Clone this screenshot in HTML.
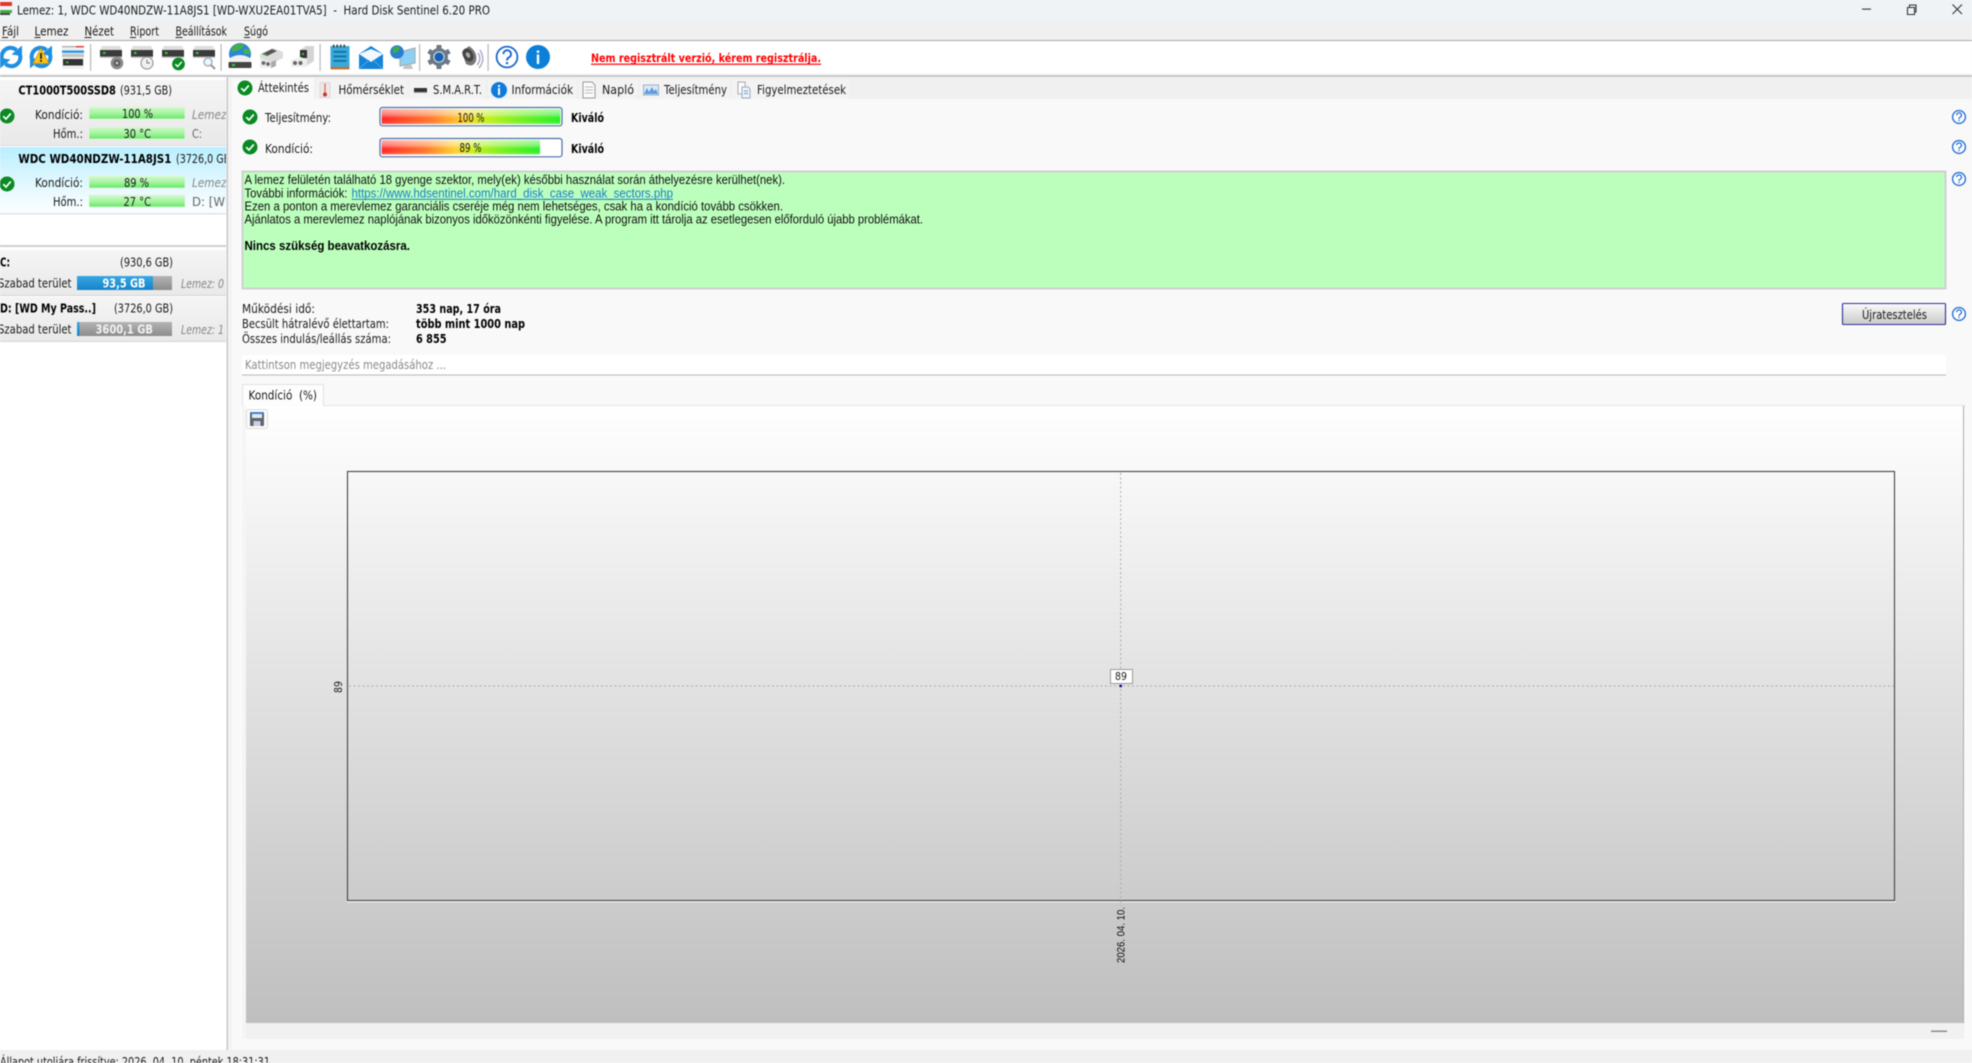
<!DOCTYPE html>
<html lang="hu"><head><meta charset="utf-8"><title>Hard Disk Sentinel</title>
<style>
html,body{margin:0;padding:0;background:#f9f9f9;width:1972px;height:1063px;overflow:hidden}
body>svg{display:block;position:absolute;left:0;top:0;filter:blur(.4px)}
text{font-family:"DejaVu Sans","Liberation Sans",sans-serif;font-size:12px;fill:#1a1a1a;white-space:pre}
.b{font-weight:bold;fill:#000}
.a{font-family:"Liberation Sans",Arial,sans-serif;font-size:12.5px;fill:#111}
.g{fill:#888;font-style:italic}
.w{fill:#fff;font-weight:bold}
</style></head><body>
<svg width="1972" height="1063" viewBox="0 0 1972 1063" xmlns="http://www.w3.org/2000/svg">
<defs>
<clipPath id="pc"><rect x="0" y="77" width="226" height="973"/></clipPath>
<linearGradient id="chart" x1="0" y1="0" x2="0" y2="1"><stop offset="0" stop-color="#ffffff"/><stop offset="1" stop-color="#bfbfbf"/></linearGradient>
<linearGradient id="gbar" x1="0" y1="0" x2="0" y2="1"><stop offset="0" stop-color="#d2f9cc"/><stop offset=".5" stop-color="#a8f4a2"/><stop offset="1" stop-color="#62ea62"/></linearGradient>
<linearGradient id="rg" x1="0" y1="0" x2="1" y2="0"><stop offset="0" stop-color="#ff2a2a"/><stop offset=".28" stop-color="#ff7a2a"/><stop offset=".46" stop-color="#ffd030"/><stop offset=".58" stop-color="#c8f020"/><stop offset=".75" stop-color="#80f020"/><stop offset="1" stop-color="#28f028"/></linearGradient>
<linearGradient id="gloss" x1="0" y1="0" x2="0" y2="1"><stop offset="0" stop-color="#fff" stop-opacity=".62"/><stop offset=".35" stop-color="#fff" stop-opacity=".38"/><stop offset=".6" stop-color="#fff" stop-opacity="0"/><stop offset=".8" stop-color="#fff" stop-opacity="0"/><stop offset="1" stop-color="#fff" stop-opacity=".2"/></linearGradient>
<linearGradient id="sel" x1="0" y1="0" x2="0" y2="1"><stop offset="0" stop-color="#b9efff"/><stop offset=".55" stop-color="#e2f8ff"/><stop offset="1" stop-color="#fbfeff"/></linearGradient>
<linearGradient id="card" x1="0" y1="0" x2="0" y2="1"><stop offset="0" stop-color="#f5f5f5"/><stop offset="1" stop-color="#e9e9e9"/></linearGradient>
<linearGradient id="blue" x1="0" y1="0" x2="0" y2="1"><stop offset="0" stop-color="#38a8e4"/><stop offset="1" stop-color="#1583c8"/></linearGradient>
<linearGradient id="gray" x1="0" y1="0" x2="0" y2="1"><stop offset="0" stop-color="#b4b4b4"/><stop offset="1" stop-color="#8c8c8c"/></linearGradient>
<linearGradient id="btn" x1="0" y1="0" x2="0" y2="1"><stop offset="0" stop-color="#fbfbfb"/><stop offset="1" stop-color="#c9c9c9"/></linearGradient>
<g id="chk"><circle r="7.5" fill="#0a8a22"/><path d="M-3.8,.2 L-1,3 L3.8,-2.6" fill="none" stroke="#fff" stroke-width="1.7"/></g>
<g id="hlp"><circle r="6.4" fill="#fff" stroke="#2a72d6" stroke-width="1.4"/><path d="M-2.2,-1.8 A2.3,2.3 0 1 1 1,.3 Q0,1 0,2" fill="none" stroke="#2a72d6" stroke-width="1.3"/><rect x="-.7" y="2.8" width="1.4" height="1.4" fill="#2a72d6"/></g>
<g id="hdd"><path d="M-9,-6 L-11,-2 H11 L9,-6 Z" fill="#dedede"/><rect x="-11" y="-2" width="22" height="6.6" fill="#3b3b3b"/><rect x="-8" y="0" width="2.5" height="2" fill="#35d035"/><rect x="-11" y="4.6" width="22" height="1.2" fill="#b4b4b4"/></g>
<g id="ref"><path d="M-8.8,3 A9,9 0 0 1 5.5,-7" fill="none" stroke="#1f8fe2" stroke-width="4"/><path d="M11,-11.5 L11,-1 L.5,-2.5 Z" fill="#1f8fe2"/><path d="M8.8,-3 A9,9 0 0 1 -5.5,7" fill="none" stroke="#1f8fe2" stroke-width="4"/><path d="M-11,11.5 L-11,1 L-.5,2.5 Z" fill="#1f8fe2"/></g>
</defs>

<!-- base -->
<rect width="1972" height="1063" fill="#f9f9f9"/>
<rect width="1972" height="21" fill="#eff3f5"/>
<rect y="21" width="1972" height="19" fill="#f0f0f0"/>
<rect y="40" width="1972" height="1" fill="#a8a8a8"/>
<rect y="41" width="1972" height="33" fill="#fff"/>
<rect y="74" width="1972" height="2" fill="#ececec"/>
<rect y="75.5" width="1972" height="1.2" fill="#b4b4b4"/>
<rect x="228" y="77" width="1744" height="22" fill="#f0f0f0"/>

<!-- title -->
<rect x="0" y="2" width="12" height="4" fill="#e8322e"/><rect x="0" y="6" width="12" height="4" fill="#f4f4f4"/><rect x="0" y="10" width="12" height="3" fill="#3fae4a"/><rect x="0" y="13" width="10" height="2" fill="#444"/>
<text x="17" y="14.5" textLength="473" lengthAdjust="spacingAndGlyphs">Lemez: 1, WDC WD40NDZW-11A8JS1 [WD-WXU2EA01TVA5]  -  Hard Disk Sentinel 6.20 PRO</text>
<rect x="1862" y="8.5" width="9" height="1.2" fill="#444"/>
<path d="M1907.5,7.5 h7 v7 h-7 z M1909.5,7 v-2 h6.5 v7 h-1.5" fill="none" stroke="#333" stroke-width="1.1"/>
<path d="M1952.5,4.5 L1962,14 M1962,4.5 L1952.5,14" stroke="#333" stroke-width="1.1"/>

<!-- menu -->
<text x="2" y="35.5" textLength="17" lengthAdjust="spacingAndGlyphs">Fájl</text>
<text x="34.5" y="35.5" textLength="34" lengthAdjust="spacingAndGlyphs">Lemez</text>
<text x="84.5" y="35.5" textLength="29.5" lengthAdjust="spacingAndGlyphs">Nézet</text>
<text x="130" y="35.5" textLength="29" lengthAdjust="spacingAndGlyphs">Riport</text>
<text x="175.5" y="35.5" textLength="51.5" lengthAdjust="spacingAndGlyphs">Beállítások</text>
<text x="244" y="35.5" textLength="24" lengthAdjust="spacingAndGlyphs">Súgó</text>
<g fill="#222"><rect x="2" y="37" width="6" height="1"/><rect x="34.5" y="37" width="6" height="1"/><rect x="84.5" y="37" width="7" height="1"/><rect x="130" y="37" width="6" height="1"/><rect x="175.5" y="37" width="7" height="1"/><rect x="244" y="37" width="6" height="1"/></g>

<!-- toolbar -->
<use href="#ref" x="11" y="57"/>
<use href="#ref" x="41" y="57"/>
<path d="M41,48 L49,63.5 H33 Z" fill="#f6c21c" stroke="#c88a00" stroke-width=".7"/><rect x="40.1" y="53" width="1.8" height="6" fill="#222"/><rect x="40.1" y="60" width="1.8" height="1.8" fill="#222"/>
<g transform="translate(73,57)"><rect x="-11" y="-11" width="22" height="23" fill="#efefef"/><rect x="-11" y="-11" width="22" height="1.3" fill="#b0b0b0"/><rect x="3" y="-11" width="8" height="1.3" fill="#e03030"/><rect x="-11" y="-6.5" width="22" height="2.4" fill="#2a9ae4"/><rect x="-11" y="-3" width="22" height="3" fill="#c4c4c4"/><rect x="-10" y="2" width="20" height="6.5" fill="#333"/><rect x="-7" y="4.5" width="2.4" height="1.6" fill="#35d035"/></g>
<rect x="90" y="44" width="1.2" height="27" fill="#b8b8b8"/>
<use href="#hdd" x="111" y="52"/><use href="#hdd" x="142" y="52"/><use href="#hdd" x="173" y="52"/><use href="#hdd" x="204" y="52"/>
<g transform="translate(117,63)"><circle r="6.3" fill="#8a8a8a"/><circle r="3.4" fill="#5a5a5a"/><circle r="1.4" fill="#ccc"/></g>
<g transform="translate(147,63)"><circle r="6" fill="#f2f2f2" stroke="#999" stroke-width="1.2"/><path d="M0,-3.5 V0 H3" fill="none" stroke="#777" stroke-width="1"/></g>
<use href="#chk" transform="translate(178.5,64) scale(.85)"/>
<g transform="translate(208,62)"><circle r="4" fill="#eef6ff" stroke="#9ab" stroke-width="1.3"/><path d="M3,3 L7,7" stroke="#999" stroke-width="2"/></g>
<rect x="220.5" y="44" width="1.2" height="27" fill="#b8b8b8"/>
<g transform="translate(240,54)"><circle r="11" fill="#2a86d8"/><path d="M-7,-8 Q-2,-11 3,-10 Q5,-7 1,-5 Q-3,-3 -9,-2 Z" fill="#45b04a"/><path d="M3,-5 L10,-5 L10,0 L4,0 Z" fill="#48b050"/><path d="M-10,4 Q0,-2 10,4 L11.5,8 H-11.5 Z" fill="#f0f0f0"/><rect x="-11.5" y="8" width="23" height="6" rx="1" fill="#444"/><rect x="-8" y="10" width="3" height="2" fill="#35d035"/></g>
<g transform="translate(271,57)"><path d="M-11,-3 L2,-9 L12,-5 L12,1 L0,7 L-11,3 Z" fill="#dcdcdc"/><path d="M-9,-3 L1,-8 L6,-6 L-4,-1 Z" fill="#555"/><rect x="-7" y="-3" width="2" height="1.5" fill="#35d035"/><path d="M-11,1 L0,5 V11 H-11 Z" fill="#eee"/><path d="M0,5 L5,3 V9 L0,11 Z" fill="#aaa"/><circle cx="-7.5" cy="6" r="1.9" fill="#666"/><circle cx="-3" cy="7" r="1.9" fill="#666"/></g>
<g transform="translate(303,57)"><path d="M-3,-7 L3,-11 H11 V4 L3,9 L-3,6 Z" fill="#d4d4d4"/><rect x="-3" y="-7" width="7" height="8" fill="#333"/><rect x="-1" y="-4" width="2" height="2" fill="#35d035"/><path d="M-12,3 L-3,0 L4,2 V10 H-12 Z" fill="#eee"/><circle cx="-8" cy="6" r="2" fill="#666"/><circle cx="-2.5" cy="6" r="2" fill="#666"/></g>
<rect x="319.5" y="44" width="1.2" height="27" fill="#b8b8b8"/>
<g transform="translate(340,57)"><rect x="-9.5" y="-11" width="19" height="23" fill="#39a9dc"/><rect x="-9.5" y="10" width="19" height="2.4" fill="#c8702a"/><g fill="#0d6f9f"><rect x="-6.5" y="-6" width="13" height="1.7"/><rect x="-6.5" y="-1.5" width="13" height="1.7"/><rect x="-6.5" y="3" width="13" height="1.7"/></g><g fill="#333"><rect x="-7" y="-12.5" width="1.4" height="3"/><rect x="-3.5" y="-12.5" width="1.4" height="3"/><rect x="0" y="-12.5" width="1.4" height="3"/><rect x="3.5" y="-12.5" width="1.4" height="3"/></g></g>
<g transform="translate(371,57)"><path d="M-12,-3 L0,-11 L12,-3 V12 H-12 Z" fill="#1583d6"/><path d="M-12,-3 L0,5 L12,-3 L0,-8 Z" fill="#f2f8fd"/><path d="M-12,12 L-2,3 M12,12 L2,3" stroke="#47a8ea" stroke-width="1"/></g>
<g transform="translate(403,57)"><path d="M-3,-5 L12,-9 V6 L-3,9 Z" fill="#8cd0f4" stroke="#a8aeb4" stroke-width="1.2"/><circle cx="-6" cy="-5" r="6.8" fill="#2a7fd0"/><path d="M-10,-9 Q-6,-12 -3,-9 Q-5,-4 -10,-4 Z" fill="#3cae48"/><path d="M1,9 L8,7 L10,12 L0,12 Z" fill="#c4c4c4"/></g>
<rect x="419" y="44" width="1.2" height="27" fill="#b8b8b8"/>
<g transform="translate(439,57)"><circle r="9" fill="#6c7884"/><g stroke="#6c7884" stroke-width="5"><path d="M0,-12 V12 M-10.4,-6 L10.4,6 M-10.4,6 L10.4,-6"/></g><circle r="5.6" fill="#d8e2ec"/><circle r="4.6" fill="#1761b4"/></g>
<g transform="translate(471,57)"><path d="M-9,-5 L-2,-11 Q7,-5 5,4 Q2,11 -5,7 Z" fill="#777"/><ellipse cx="-3" cy="-2" rx="5" ry="7" fill="#444" transform="rotate(-30 -3 -2)"/><ellipse cx="-3" cy="-2" rx="2" ry="3" fill="#aaa" transform="rotate(-30 -3 -2)"/><path d="M7,-4 Q11,2 6,8 M9,-7 Q15,3 8,11" fill="none" stroke="#a8a8c8" stroke-width="1.4"/></g>
<rect x="487.5" y="44" width="1.2" height="27" fill="#b8b8b8"/>
<g transform="translate(507,57)"><circle r="10.4" fill="#fff" stroke="#1f68cc" stroke-width="1.8"/><path d="M-3.6,-3 A3.8,3.8 0 1 1 1.6,.6 Q0,1.6 0,3.5" fill="none" stroke="#1f68cc" stroke-width="2"/><rect x="-1.1" y="5" width="2.2" height="2.2" fill="#1f68cc"/></g>
<g transform="translate(538,57)"><circle r="12" fill="#0c7fd8"/><rect x="-1.2" y="-2.5" width="2.4" height="9.5" fill="#fff"/><rect x="-1.2" y="-6.5" width="2.4" height="2.4" fill="#fff"/></g>
<text class="b" x="591" y="62" textLength="230" lengthAdjust="spacingAndGlyphs" style="fill:#f00;font-size:11.5px">Nem regisztrált verzió, kérem regisztrálja.</text>
<rect x="591" y="63.6" width="230" height="1.2" fill="#f00"/>

<!-- left panel -->
<rect x="0" y="77" width="226.5" height="973" fill="#fff"/>
<rect x="226.5" y="77" width="1.6" height="973" fill="#c8c8c8"/>
<rect x="228" y="77" width="4" height="973" fill="#f3f3f3"/>
<rect y="80" width="226" height="65" fill="url(#card)"/>
<rect y="145" width="226" height="1" fill="#ddd"/>
<rect y="147" width="226" height="66" fill="url(#sel)"/>
<rect y="213" width="226" height="1.5" fill="#e2e2e2"/>
<rect y="245" width="226" height="2" fill="#cfcfcf"/>
<rect y="250" width="226" height="45" fill="url(#card)"/>
<rect y="295" width="226" height="1" fill="#d6d6d6"/>
<rect y="297" width="226" height="44" fill="url(#card)"/>
<rect y="341" width="226" height="1" fill="#d6d6d6"/>

<g clip-path="url(#pc)">
<text class="b" x="18.4" y="94.5" textLength="97.5" lengthAdjust="spacingAndGlyphs">CT1000T500SSD8</text>
<text x="120" y="94.5" textLength="52" lengthAdjust="spacingAndGlyphs">(931,5 GB)</text>
<use href="#chk" x="7" y="116"/>
<text x="35" y="119" textLength="48" lengthAdjust="spacingAndGlyphs">Kondíció:</text>
<rect x="89" y="107" width="96" height="12" fill="url(#gbar)" stroke="#e6f6e4" stroke-width=".7"/>
<text x="122" y="118" textLength="31" lengthAdjust="spacingAndGlyphs">100 %</text>
<text class="g" x="192" y="119" textLength="38" lengthAdjust="spacingAndGlyphs">Lemez:</text>
<text x="53" y="138" textLength="30" lengthAdjust="spacingAndGlyphs">Hőm.:</text>
<rect x="89" y="127" width="96" height="12" fill="url(#gbar)" stroke="#e6f6e4" stroke-width=".7"/>
<text x="123.5" y="138" textLength="27.5" lengthAdjust="spacingAndGlyphs">30 °C</text>
<text x="192" y="138" textLength="10" lengthAdjust="spacingAndGlyphs" style="fill:#666">C:</text>

<text class="b" x="18.4" y="162.8" textLength="153" lengthAdjust="spacingAndGlyphs">WDC WD40NDZW-11A8JS1</text>
<text x="176" y="162.8" textLength="58" lengthAdjust="spacingAndGlyphs">(3726,0 GB)</text>
<use href="#chk" x="7" y="184"/>
<text x="35" y="187" textLength="48" lengthAdjust="spacingAndGlyphs">Kondíció:</text>
<rect x="89" y="176" width="96" height="12" fill="url(#gbar)" stroke="#e6f6e4" stroke-width=".7"/>
<text x="124" y="187" textLength="25" lengthAdjust="spacingAndGlyphs">89 %</text>
<text class="g" x="192" y="187" textLength="38" lengthAdjust="spacingAndGlyphs">Lemez:</text>
<text x="53" y="206" textLength="30" lengthAdjust="spacingAndGlyphs">Hőm.:</text>
<rect x="89" y="195" width="96" height="12" fill="url(#gbar)" stroke="#e6f6e4" stroke-width=".7"/>
<text x="123.5" y="206" textLength="27.5" lengthAdjust="spacingAndGlyphs">27 °C</text>
<text x="192" y="206" textLength="42" lengthAdjust="spacingAndGlyphs" style="fill:#666">D: [WD</text>
</g>

<text class="b" x="0" y="266.5" textLength="10" lengthAdjust="spacingAndGlyphs">C:</text>
<text x="120" y="266.5" textLength="53" lengthAdjust="spacingAndGlyphs">(930,6 GB)</text>
<text x="-2" y="287.5" textLength="73.5" lengthAdjust="spacingAndGlyphs">Szabad terület</text>
<rect x="77" y="276" width="95" height="14" fill="url(#gray)"/>
<rect x="77" y="276" width="76" height="14" fill="url(#blue)"/>
<text class="w" x="102.5" y="287.5" textLength="43" lengthAdjust="spacingAndGlyphs">93,5 GB</text>
<text class="g" x="181" y="288" textLength="43" lengthAdjust="spacingAndGlyphs">Lemez: 0</text>

<text class="b" x="0" y="312.5" textLength="96" lengthAdjust="spacingAndGlyphs">D: [WD My Pass..]</text>
<text x="114" y="312.5" textLength="59" lengthAdjust="spacingAndGlyphs">(3726,0 GB)</text>
<text x="-2" y="333.5" textLength="73.5" lengthAdjust="spacingAndGlyphs">Szabad terület</text>
<rect x="77" y="322" width="95" height="14" fill="url(#gray)"/>
<rect x="77" y="322" width="2.5" height="14" fill="url(#blue)"/>
<text class="w" x="95.5" y="333.5" textLength="57.5" lengthAdjust="spacingAndGlyphs" style="fill:#f2f2f2">3600,1 GB</text>
<text class="g" x="181" y="334" textLength="43" lengthAdjust="spacingAndGlyphs">Lemez: 1</text>

<!-- tabs -->
<rect x="232" y="78" width="82" height="21" fill="#f9f9f9"/>
<rect x="316" y="79" width="91" height="20" fill="#f3f3f3"/>
<rect x="409" y="79" width="77" height="20" fill="#f3f3f3"/>
<rect x="488" y="79" width="89" height="20" fill="#f3f3f3"/>
<rect x="579" y="79" width="59" height="20" fill="#f3f3f3"/>
<rect x="640" y="79" width="90" height="20" fill="#f3f3f3"/>
<rect x="732" y="79" width="117" height="20" fill="#f3f3f3"/>
<use href="#chk" x="245" y="88"/>
<text x="258" y="92" textLength="51" lengthAdjust="spacingAndGlyphs">Áttekintés</text>
<g transform="translate(325,90)"><rect x="-5" y="-7.5" width="10" height="15" fill="#efe8e8" stroke="#ccc" stroke-width=".6"/><rect x="-.7" y="-6.5" width="1.4" height="10" fill="#d4766e"/><circle cy="4.5" r="2" fill="#c8342c"/></g>
<text x="338.5" y="94" textLength="65.5" lengthAdjust="spacingAndGlyphs">Hőmérséklet</text>
<rect x="414" y="88" width="13" height="4" fill="#333"/><rect x="414" y="92" width="13" height="1" fill="#aaa"/>
<text x="433" y="94" textLength="49" lengthAdjust="spacingAndGlyphs">S.M.A.R.T.</text>
<g transform="translate(499,90)"><circle r="8" fill="#0f7bdc"/><rect x="-1" y="-2" width="2" height="7" fill="#fff"/><rect x="-1" y="-5" width="2" height="2" fill="#fff"/></g>
<text x="511.5" y="94" textLength="61.5" lengthAdjust="spacingAndGlyphs">Információk</text>
<g transform="translate(589,90)"><path d="M-6,-8 H3 L6,-5 V8 H-6 Z" fill="#fbfbfb" stroke="#999"/><path d="M-4,-3 H4 M-4,0 H4 M-4,3 H4" stroke="#bbb"/></g>
<text x="602" y="94" textLength="32" lengthAdjust="spacingAndGlyphs">Napló</text>
<g transform="translate(651,90)"><rect x="-7.5" y="-5" width="15" height="10" fill="#dbe8f6" stroke="#9ab2cc"/><path d="M-7,4 L-4,-2 L-2,2 L1,-3 L3,1 L5,-1 L7,4 Z" fill="#5a9ee0"/></g>
<text x="664" y="94" textLength="63" lengthAdjust="spacingAndGlyphs">Teljesítmény</text>
<g transform="translate(744,90)"><path d="M-6,-8 H1 V4 H-6 Z" fill="#fbfbfb" stroke="#aaa"/><path d="M-2,-3 H4 L6,-1 V8 H-2 Z" fill="#eef3fa" stroke="#9ab"/><path d="M0,1 H4 M0,3.5 H4" stroke="#6a9ad4"/></g>
<text x="757" y="94" textLength="89" lengthAdjust="spacingAndGlyphs">Figyelmeztetések</text>

<!-- status rows -->
<use href="#chk" x="250" y="117"/>
<use href="#chk" x="250" y="147"/>
<text x="265" y="122" textLength="66" lengthAdjust="spacingAndGlyphs">Teljesítmény:</text>
<text x="265" y="153" textLength="48" lengthAdjust="spacingAndGlyphs">Kondíció:</text>
<rect x="380" y="107.5" width="182" height="18.3" rx="2.5" fill="#fff" stroke="#4c6fa8" stroke-width="1.2"/>
<rect x="381.7" y="109.3" width="178.6" height="14.7" fill="url(#rg)"/><rect x="381.7" y="109.3" width="178.6" height="14.7" fill="url(#gloss)"/>
<text x="457.5" y="122" textLength="27" lengthAdjust="spacingAndGlyphs">100 %</text>
<rect x="380" y="138.5" width="182" height="18.3" rx="2.5" fill="#fff" stroke="#4c6fa8" stroke-width="1.2"/>
<rect x="381.7" y="140.3" width="158.3" height="14" fill="url(#rg)"/><rect x="381.7" y="140.3" width="158.3" height="14" fill="url(#gloss)"/>
<text x="459.5" y="152" textLength="22" lengthAdjust="spacingAndGlyphs">89 %</text>
<text class="b" x="571" y="122" textLength="33" lengthAdjust="spacingAndGlyphs">Kiváló</text>
<text class="b" x="571" y="153" textLength="33" lengthAdjust="spacingAndGlyphs">Kiváló</text>
<use href="#hlp" x="1959" y="117"/>
<use href="#hlp" x="1959" y="147"/>
<use href="#hlp" x="1959" y="179"/>
<use href="#hlp" x="1959" y="314"/>

<!-- green box -->
<rect x="242.5" y="171.5" width="1703" height="117" fill="#bcffbc" stroke="#d0d0d0" stroke-width="2"/>
<text class="a" x="244.5" y="184" textLength="540.5" lengthAdjust="spacingAndGlyphs">A lemez felületén található 18 gyenge szektor, mely(ek) későbbi használat során áthelyezésre kerülhet(nek).</text>
<text class="a" x="244.5" y="197.5" textLength="103" lengthAdjust="spacingAndGlyphs">További információk:</text>
<text class="a" x="351.5" y="197.5" textLength="321.5" lengthAdjust="spacingAndGlyphs" style="fill:#1a7fc8">https://www.hdsentinel.com/hard_disk_case_weak_sectors.php</text>
<rect x="351.5" y="198.8" width="321.5" height="1" fill="#1a7fc8"/>
<text class="a" x="244.5" y="210.5" textLength="538.5" lengthAdjust="spacingAndGlyphs">Ezen a ponton a merevlemez garanciális cseréje még nem lehetséges, csak ha a kondíció tovább csökken.</text>
<text class="a" x="244.5" y="223.5" textLength="678.5" lengthAdjust="spacingAndGlyphs">Ajánlatos a merevlemez naplójának bizonyos időközönkénti figyelése. A program itt tárolja az esetlegesen előforduló újabb problémákat.</text>
<text class="a" x="244.5" y="250" textLength="165.5" lengthAdjust="spacingAndGlyphs" style="font-weight:bold;fill:#000">Nincs szükség beavatkozásra.</text>

<!-- info -->
<text x="242" y="313" textLength="73" lengthAdjust="spacingAndGlyphs">Működési idő:</text>
<text x="242" y="328" textLength="147" lengthAdjust="spacingAndGlyphs">Becsült hátralévő élettartam:</text>
<text x="242" y="343" textLength="149" lengthAdjust="spacingAndGlyphs">Összes indulás/leállás száma:</text>
<text class="b" x="416" y="313" textLength="85" lengthAdjust="spacingAndGlyphs">353 nap, 17 óra</text>
<text class="b" x="416" y="328" textLength="109" lengthAdjust="spacingAndGlyphs">több mint 1000 nap</text>
<text class="b" x="416" y="343" textLength="30.5" lengthAdjust="spacingAndGlyphs">6 855</text>
<rect x="1842.5" y="303.5" width="103" height="21" rx="1" fill="url(#btn)" stroke="#2d2d96" stroke-width="1.1"/>
<text x="1862" y="319" textLength="65" lengthAdjust="spacingAndGlyphs">Újratesztelés</text>
<rect x="242" y="355" width="1704" height="20" fill="#fff"/>
<rect x="242" y="374.5" width="1704" height="1" fill="#b8b8b8"/>
<text x="245" y="369" textLength="201" lengthAdjust="spacingAndGlyphs" style="fill:#8a8a8a">Kattintson megjegyzés megadásához ...</text>

<!-- chart container -->
<rect x="241.5" y="405" width="1724" height="635" fill="#f5f5f5" stroke="#fcfcfc" stroke-width="1"/>
<rect x="242" y="384" width="82" height="22" fill="#fdfdfd"/>
<path d="M242.5,406 V384.5 H323.5 V405.5 H1965.5" fill="none" stroke="#e2e2e2" stroke-width="1"/>
<text x="248.5" y="399.5" textLength="68.5" lengthAdjust="spacingAndGlyphs">Kondíció  (%)</text>
<rect x="246" y="406" width="1717" height="617" fill="url(#chart)"/>
<rect x="1963" y="406" width="1" height="617" fill="#b0b0b0"/>
<rect x="246" y="1023" width="1718" height="16" fill="#f1f1f1"/>
<rect x="1931" y="1030.5" width="16" height="1.5" fill="#8a8a8a"/>
<rect x="246.5" y="409.5" width="21" height="19" rx="2" fill="#fbfbfb" stroke="#ddd"/>
<g transform="translate(257,419)"><rect x="-7" y="-7" width="14" height="14" rx="1" fill="#5c6670"/><rect x="-6" y="-7" width="12" height="2" fill="#3a80d8"/><rect x="-5" y="-5" width="10" height="4" fill="#e4e8ec"/><rect x="-3.5" y="2" width="7" height="5" fill="#ccd"/></g>

<!-- plot -->
<rect x="347.5" y="471.5" width="1547" height="429" fill="none" stroke="#444" stroke-width="1.1"/>
<rect x="347" y="901.2" width="1549" height="1.2" fill="#f2f2f2"/>
<path d="M1120.7,473 V906" stroke="#aaa" stroke-width="1" stroke-dasharray="2 2.5"/>
<path d="M349,686 H1894" stroke="#aaa" stroke-width="1" stroke-dasharray="2 2.5"/>
<rect x="1110.5" y="669.5" width="22" height="14" fill="#fff" stroke="#999"/>
<text x="1115" y="680" textLength="12" lengthAdjust="spacingAndGlyphs" style="font-size:10.5px">89</text>
<rect x="1119.5" y="684.8" width="2.4" height="2.4" fill="#00008c"/>
<text transform="translate(342,693) rotate(-90)" textLength="12" lengthAdjust="spacingAndGlyphs" style="font-size:10.5px">89</text>
<text class="a" transform="translate(1124.5,963) rotate(-90)" textLength="56" lengthAdjust="spacingAndGlyphs" style="font-size:11px">2026. 04. 10.</text>

<!-- status bar -->
<rect y="1050" width="1972" height="13" fill="#f0f0f0"/>
<text x="0" y="1066" textLength="270" lengthAdjust="spacingAndGlyphs">Állapot utoljára frissítve: 2026. 04. 10. péntek 18:31:31</text>
</svg>
</body></html>
